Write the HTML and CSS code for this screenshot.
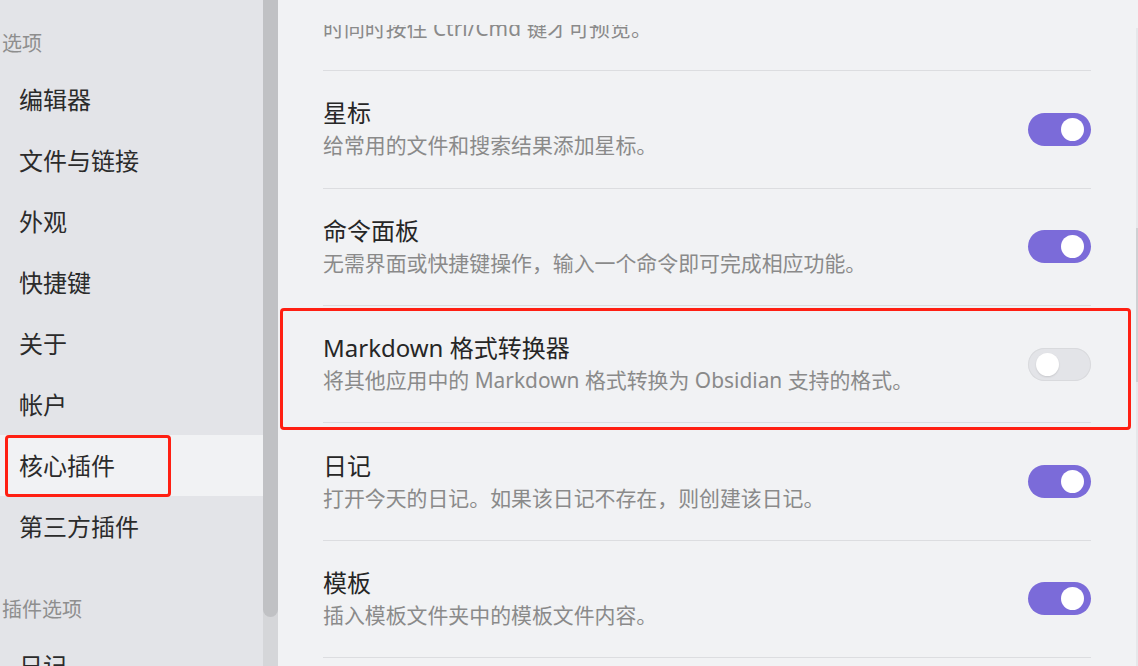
FILE: index.html
```html
<!DOCTYPE html>
<html lang="zh-CN">
<head>
<meta charset="utf-8">
<title>设置</title>
<link rel="stylesheet" href="styles.css">
</head>
<body>
<div class="app">
  <aside class="sidebar">
    <div class="nav">
      <div class="group-title">选项</div>
      <div class="nav-item">编辑器</div>
      <div class="nav-item">文件与链接</div>
      <div class="nav-item">外观</div>
      <div class="nav-item">快捷键</div>
      <div class="nav-item">关于</div>
      <div class="nav-item">帐户</div>
      <div class="nav-item is-active">核心插件<span class="mark mark-nav"></span></div>
      <div class="nav-item">第三方插件</div>
      <div class="group-title group-gap">插件选项</div>
      <div class="nav-item">日记</div>
    </div>
    <div class="side-scroll"><div class="side-thumb"></div></div>
  </aside>
  <main class="main">
    <div class="clip">
      <div class="list">
        <div class="row row-first">
          <div class="info">
            <div class="desc">时同时按住 Ctrl/Cmd 键才可预览。</div>
          </div>
        </div>
        <div class="row">
          <div class="info">
            <div class="name">星标</div>
            <div class="desc">给常用的文件和搜索结果添加星标。</div>
          </div>
          <div class="toggle on"><span class="knob"></span></div>
        </div>
        <div class="row">
          <div class="info">
            <div class="name">命令面板</div>
            <div class="desc">无需界面或快捷键操作，输入一个命令即可完成相应功能。</div>
          </div>
          <div class="toggle on"><span class="knob"></span></div>
        </div>
        <div class="row">
          <div class="info">
            <div class="name">Markdown 格式转换器</div>
            <div class="desc">将其他应用中的 Markdown 格式转换为 Obsidian 支持的格式。</div>
          </div>
          <div class="toggle"><span class="knob"></span></div>
          <span class="mark mark-row"></span>
        </div>
        <div class="row">
          <div class="info">
            <div class="name">日记</div>
            <div class="desc">打开今天的日记。如果该日记不存在，则创建该日记。</div>
          </div>
          <div class="toggle on"><span class="knob"></span></div>
        </div>
        <div class="row">
          <div class="info">
            <div class="name">模板</div>
            <div class="desc">插入模板文件夹中的模板文件内容。</div>
          </div>
          <div class="toggle on"><span class="knob"></span></div>
        </div>
      </div>
      <div class="vbar"><div class="vthumb"></div></div>
    </div>
  </main>
</div>
</body>
</html>
```
FILE: styles.css
```css
* { box-sizing: border-box; }
html, body { margin: 0; padding: 0; }
body {
  width: 1138px;
  height: 666px;
  overflow: hidden;
  font-family: "Noto Sans", "Noto Sans CJK SC", sans-serif;
  color: #2b2b2b;
  background: #f1f2f4;
}
.app {
  display: flex;
  width: 1138px;
  height: 666px;
}
.sidebar {
  display: flex;
  width: 278px;
  flex: none;
  background: #e3e4e8;
}
.nav {
  width: 263px;
  padding-top: 24px;
}
.group-title {
  height: 40px;
  line-height: 40px;
  font-size: 20px;
  color: #8e8e8e;
  padding-left: 2px;
  margin-bottom: 4.5px;
}
.group-gap { margin-top: 33.5px; }
.nav-item {
  position: relative;
  height: 61px;
  line-height: 61px;
  font-size: 24px;
  padding-left: 19px;
  color: #2b2b2b;
}
.nav-item.is-active { background: #f1f2f4; }
.side-scroll {
  width: 15px;
  background: #d5d6d9;
}
.side-thumb {
  height: 617px;
  background: #c0c1c4;
  border-radius: 0 0 8px 8px;
}
.mark {
  position: absolute;
  border: 3px solid #ff1f12;
  border-radius: 4px;
  pointer-events: none;
}
.mark-nav {
  left: 5px;
  top: 0.5px;
  width: 166px;
  height: 62px;
}
.main {
  flex: 1;
  padding-top: 25px;
  height: 666px;
}
.clip {
  display: flex;
  height: 641px;
  overflow: hidden;
}
.list {
  width: 768px;
  margin-left: 45px;
}
.row {
  position: relative;
  display: flex;
  align-items: center;
  padding: 26.2px 0;
  border-bottom: 1px solid #dcdde0;
}
.row-first {
  margin-top: -13px;
  padding-top: 0;
}
.info { flex: 1; }
.name {
  font-size: 24px;
  line-height: 32px;
  color: #262626;
}
.desc {
  font-size: 20.9px;
  line-height: 32px;
  color: #8a8a8a;
}
.toggle {
  position: relative;
  width: 63px;
  height: 33px;
  border-radius: 17px;
  background: #e3e4e8;
  box-shadow: inset 0 0 0 1px #d9dadd;
  flex: none;
}
.toggle.on {
  background: #7b6bd9;
  box-shadow: none;
}
.knob {
  position: absolute;
  top: 5px;
  left: 8px;
  width: 23px;
  height: 23px;
  border-radius: 50%;
  background: #ffffff;
  box-shadow: 0 1px 2px rgba(0,0,0,0.12);
}
.toggle.on .knob {
  left: auto;
  right: 7px;
  box-shadow: none;
}
.mark-row {
  left: -43px;
  top: 2.3px;
  width: 851px;
  height: 122px;
  z-index: 2;
}
.vbar {
  width: 2px;
  margin-left: auto;
  margin-top: 3px;
  background: #e6e7ea;
}
.vthumb {
  margin-top: 200px;
  height: 154px;
  background: #cfd0d3;
}
```
